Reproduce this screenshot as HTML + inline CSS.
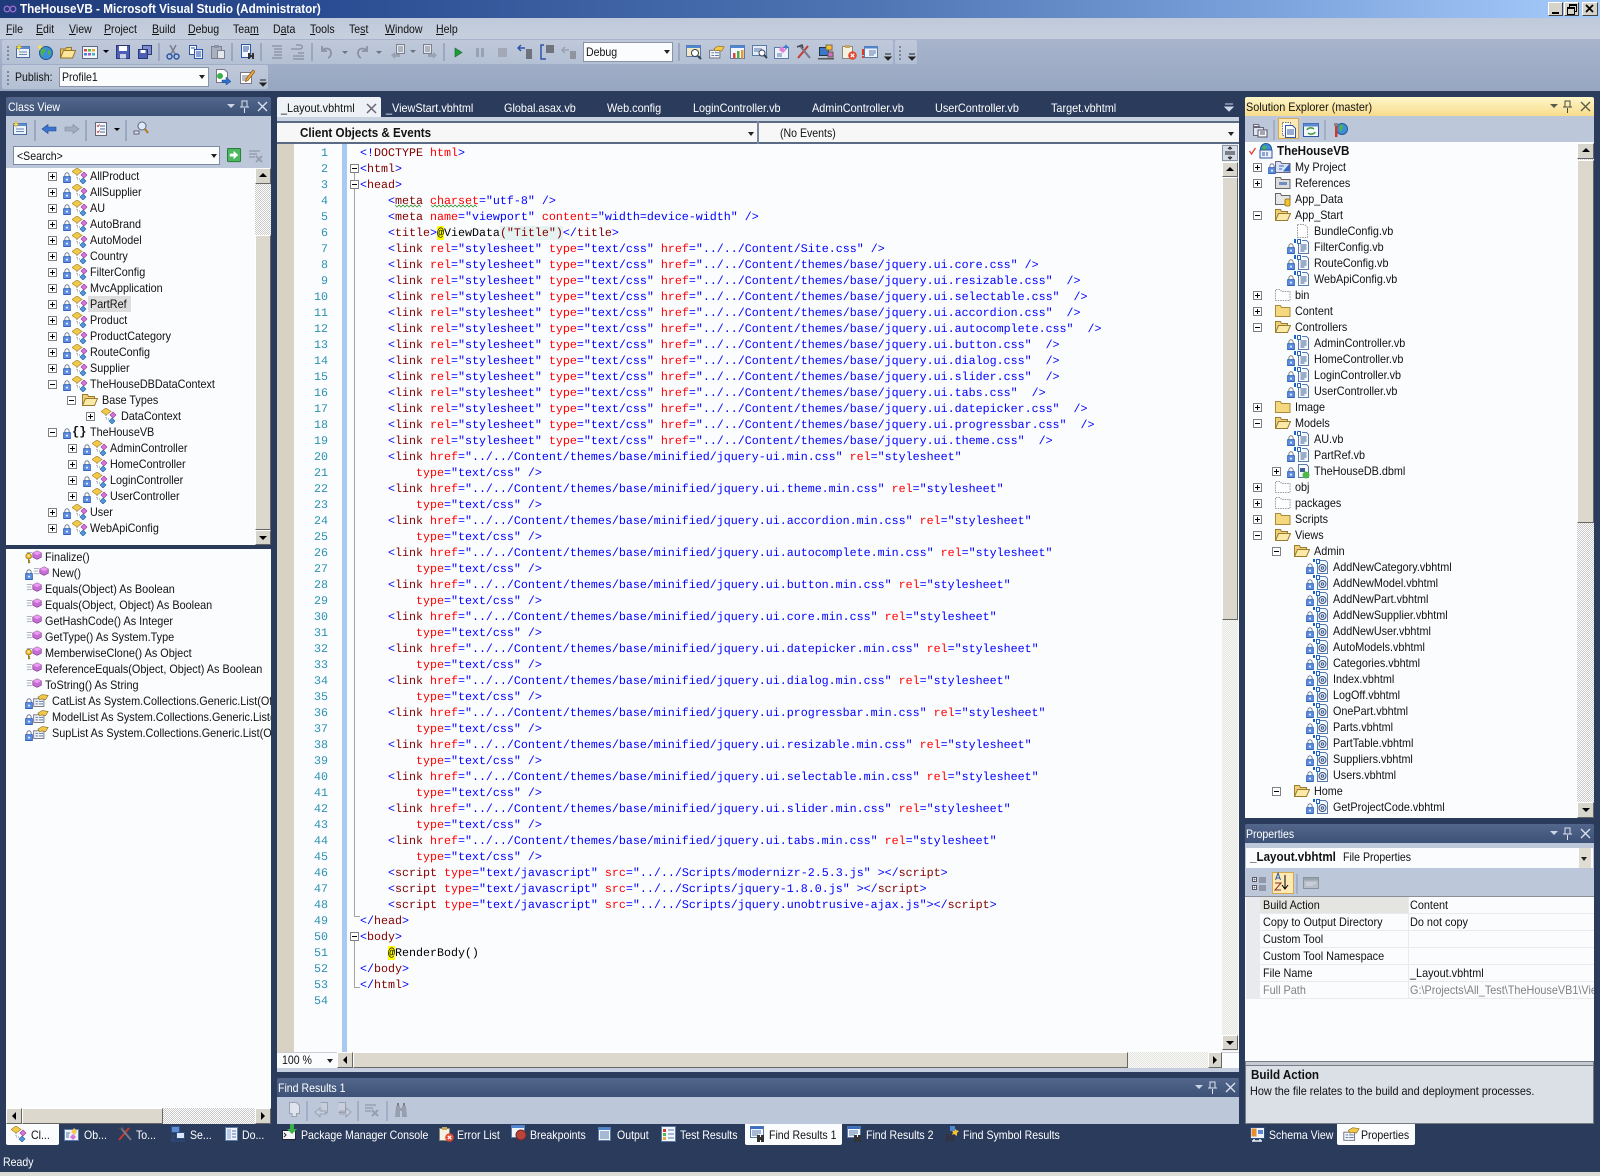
<!DOCTYPE html>
<html><head><meta charset="utf-8"><title>TheHouseVB - Microsoft Visual Studio</title>
<style>
html,body{margin:0;padding:0}
body{width:1600px;height:1176px;position:relative;overflow:hidden;background:#2a3b5c;font:12px/16px "Liberation Sans",sans-serif;color:#111}
div,span,svg{position:absolute;display:block}
.t{white-space:pre;transform:scaleX(.88);transform-origin:0 0;line-height:16px}
.t.f{transform:scaleX(.905)}
.t.bd{font-weight:bold;font-size:12.5px;transform:scaleX(.93)}
.w{color:#fff}
.t u{position:static;text-decoration:underline}
.pt{background:linear-gradient(#52678b,#3d5178)}
.tb{background:#bcc7da}
.wh{background:#fbfcfe}
.thumb{background:#dcd8cd;border:1px solid;border-color:#fff #666 #666 #fff;box-sizing:border-box}
.btn{background:#d8d5cc;border:1px solid;border-color:#fff #666 #666 #fff;box-sizing:border-box}
.btn:after{content:"";position:absolute;left:50%;top:50%;border:4px solid transparent;margin:-4px}
.up:after{border-bottom-color:#000;margin-top:-7px}
.dn:after{border-top-color:#000;margin-top:-2px}
.lf:after{border-right-color:#000;margin-left:-6px}
.rt:after{border-left-color:#000;margin-left:-2px}
.dith{background:repeating-conic-gradient(#c9c9c9 0 25%,#fff 0 50%) 0 0/2px 2px}
.dith2{background:repeating-conic-gradient(#e6e6e0 0 25%,#f8f8f6 0 50%) 0 0/2px 2px}
.arr{width:0;height:0;border:3.5px solid transparent;border-top:4px solid #222;border-bottom:0}
.sep{width:1px;background:#7c8aa6}
.r{left:0;height:16px;width:100%;position:relative;display:block}
.r span{left:var(--x);top:0;white-space:pre;transform:scaleX(.9);transform-origin:0 0;line-height:16px}
.r s{position:absolute;display:block;left:calc(var(--x) - 42px);top:4px;width:7px;height:7px;border:1px solid #808080;background:#fff;box-sizing:content-box;text-decoration:none;margin:0}
.r s:before{content:"";position:absolute;left:1px;top:3px;width:5px;height:1px;background:#000}
.r s.p:after{content:"";position:absolute;left:3px;top:1px;width:1px;height:5px;background:#000}
.r .k{left:calc(var(--x) - 27px);top:4px;width:8px;height:11px}
.r .c{left:calc(var(--x) - 20px);top:0;width:16px;height:16px}
.cv .c{left:calc(var(--x) - 18px)}
#code,#nums{font:11.67px/16px "Liberation Mono",monospace;white-space:pre;text-rendering:geometricPrecision}
#code{left:360px;top:145px;color:#00f;width:860px}
#code i{font-style:normal;color:#800000;position:static}
#code u{text-decoration:none;color:#f00;position:static}
#code em{font-style:normal;color:#000;position:static}
#code b{font-weight:normal;color:#000;background:#ff0;position:static}
#code q{quotes:none;color:#800000;background:#e4f2f2;position:static}
#nums{left:294px;width:34px;top:145px;text-align:right;color:#2b91af}
.gl{background:#a5a5a5;width:1px;left:354px}
</style></head><body>
<svg width="0" height="0" style="position:absolute">
<defs>
<symbol id="lk" viewBox="0 0 9 13"><path d="M2 6V3.500a2.500 2.500 0 015 0V6" fill="none" stroke="#5d6b86"/><rect x=".5" y="5.500" width="8" height="7" fill="#5c8ee2" stroke="#2d5cb3"/><rect x="3.500" y="8" width="2" height="2" fill="#fff"/></symbol>
<symbol id="cls" viewBox="0 0 16 16"><path d="M5 7v4h3" fill="none" stroke="#889" stroke-dasharray="1 1"/><path d="M5 0l5 3.500-5 3.500-5-3.500z" fill="#f3c94c" stroke="#a8822a" stroke-width=".7"/><path d="M12 4l3 3-3 3-3-3z" fill="#d874dc" stroke="#8a3c90" stroke-width=".6"/><path d="M11 10l3 3-3 3-3-3z" fill="#4f97dc" stroke="#2b5f96" stroke-width=".6"/></symbol>
<symbol id="fo" viewBox="0 0 16 16"><path d="M.5 4.500v-2h5l1 2h8.500v9H.5z" fill="#f5d77e" stroke="#a88a38"/></symbol>
<symbol id="fp" viewBox="0 0 16 16"><path d="M.5 13.500v-11h5l1 2h6v2" fill="#f1cf78" stroke="#9a7c30"/><path d="M.5 13.500l3-7h12l-3 7z" fill="#fbe9a8" stroke="#9a7c30"/></symbol>
<symbol id="fg" viewBox="0 0 16 16"><path d="M.5 4.500v-2h5l1 2h8.500v9H.5z" fill="#fff" stroke="#9a9a9a" stroke-dasharray="1.500 1"/></symbol>
<symbol id="fgr" viewBox="0 0 16 16"><path d="M.5 4.500v-2h5l1 2h8.500v9H.5z" fill="#dcdcdc" stroke="#666"/><rect x="4" y="7" width="8" height="3" fill="#6d8fc0"/></symbol>
<symbol id="fdb" viewBox="0 0 16 16"><path d="M.5 4.500v-2h5l1 2h8.500v9H.5z" fill="#e6e6e6" stroke="#666"/><rect x="10" y="8" width="5" height="7" rx="1.500" fill="#f4c430" stroke="#a88420"/></symbol>
<symbol id="fmy" viewBox="0 0 16 16"><path d="M.5 4.500v-2h5l1 2h8.500v9H.5z" fill="#d8e2f2" stroke="#667"/><path d="M4 7h5M4 10h3M9 12l5-6v6z" stroke="#2f69c8" fill="#2f69c8"/></symbol>
<symbol id="pg" viewBox="0 0 16 16"><path d="M3.500 1.500h7l3 3v10h-10z" fill="#fff" stroke="#999" stroke-dasharray="1.500 1"/></symbol>
<symbol id="vb" viewBox="0 0 16 16"><path d="M4.500 1.500h8l2 2v11h-10z" fill="#f6f9fe" stroke="#5a7aa8"/><path d="M6.500 6h6M6.500 8h6M6.500 10h6M6.500 12h4" stroke="#3e5f90"/><rect y="0" width="2" height="4" fill="#1c63c8"/><rect x="3" y="0" width="5" height="5" fill="#fff"/><path d="M3.500 .5v4M3.500.5h3v4h-3" fill="none" stroke="#1c63c8"/></symbol>
<symbol id="vh" viewBox="0 0 16 16"><path d="M4.500 1.500h8l2 2v11h-10z" fill="#f6f9fe" stroke="#5a7aa8"/><circle cx="9.500" cy="9" r="3.500" fill="none" stroke="#33507e"/><circle cx="9.500" cy="9" r="1.300" fill="none" stroke="#33507e"/><rect y="0" width="2" height="3" fill="#1c63c8"/><path d="M3.500.5h3v4h-3z" fill="#fff" stroke="#1c63c8"/></symbol>
<symbol id="dbm" viewBox="0 0 16 16"><path d="M4.500 1.500h8l2 2v11h-10z" fill="#f6f9fe" stroke="#5a7aa8"/><rect x="6" y="5" width="5" height="4" fill="#3e5f90"/><circle cx="12" cy="12" r="3.500" fill="#52b848"/></symbol>
<symbol id="mth" viewBox="0 0 20 16"><path d="M1 3h6M1 6h5M1 9h6" stroke="#a0a8b8"/><path d="M13 1l5 2.500v5L13 11l-5-2.500v-5z" fill="#c86ed4" stroke="#7e3a8a" stroke-width=".8"/><path d="M8 3.500l5 2.500 5-2.500-5-2.500z" fill="#ea9cf0"/></symbol>
<symbol id="key" viewBox="0 0 10 14"><circle cx="4.500" cy="4" r="3.500" fill="#f4c430" stroke="#9a7a1e"/><circle cx="4.500" cy="3.500" r="1" fill="#fff"/><path d="M4.500 7v6M4.500 10h2M4.500 12h2" stroke="#9a7a1e" stroke-width="1.500"/></symbol>
<symbol id="prp" viewBox="0 0 20 16"><path d="M2 6h12v9H2z" fill="#f6f8fc" stroke="#667"/><path d="M4 9h3M4 12h3M8 9h5M8 12h5" stroke="#4a6a9c"/><path d="M7 4l5-3 7 1-3 5-4-1-3 1z" fill="#f2c94c" stroke="#8a6a18" stroke-width=".7"/></symbol>
<symbol id="ws" viewBox="0 0 16 16"><rect x=".5" y="2.500" width="13" height="11" fill="#eef3fb" stroke="#4a6a9c"/><rect x=".5" y="2.500" width="13" height="2.500" fill="#5b8ad0"/><path d="M3 8h8M3 10.500h8" stroke="#6a86b0"/></symbol>
<symbol id="star" viewBox="0 0 16 16"><use href="#ws"/><path d="M3 0l1 2.500L6.500 3 4 4l-1 2.500L2 4-.5 3 2 2.500z" fill="#fbe14c" stroke="#c9a520" stroke-width=".4"/></symbol>
<symbol id="glb" viewBox="0 0 16 16"><circle cx="9" cy="9" r="6.500" fill="#3a8fd8" stroke="#24568c"/><path d="M5 5c3-1 5 1 3 3s-3 3-1 5c-2-1-5-4-2-8zM11 6c3 1 3 3 2 5-1 1-2-1-2-2z" fill="#4fb24a"/><path d="M3 0l1 2.500L6.500 3 4 4l-1 2.500L2 4-.5 3 2 2.500z" fill="#fbe14c"/></symbol>
<symbol id="opn" viewBox="0 0 16 16"><path d="M.5 14V5h5l1-1.500h5V6" fill="#eecb72" stroke="#947426"/><path d="M.5 14l3-7.500h12l-3 7.500z" fill="#fde59a" stroke="#947426"/></symbol>
<symbol id="add" viewBox="0 0 16 16"><rect x=".5" y="2.500" width="15" height="12" fill="#f4f6fb" stroke="#5a6a88"/><rect x="2" y="5" width="3" height="2.500" fill="#d8483e"/><rect x="6" y="5" width="3" height="2.500" fill="#52b848"/><rect x="10" y="5" width="3" height="2.500" fill="#e8a830"/><rect x="2" y="9" width="3" height="2.500" fill="#4a84d8"/><rect x="6" y="9" width="3" height="2.500" fill="#9a5ac8"/><rect x="10" y="9" width="3" height="2.500" fill="#3ab8b8"/></symbol>
<symbol id="sav" viewBox="0 0 16 16"><path d="M1.500 1.500h13v13h-13z" fill="#4c5fb4" stroke="#2a3878"/><rect x="4" y="2" width="8" height="5" fill="#fff"/><rect x="5" y="10" width="6" height="4.500" fill="#c8d0e4"/></symbol>
<symbol id="sva" viewBox="0 0 16 16"><path d="M5.500 1.500h9v9h-9z" fill="#7e8ecc" stroke="#2a3878"/><path d="M1.500 5.500h9v9h-9z" fill="#4c5fb4" stroke="#2a3878"/><rect x="3.500" y="6" width="5" height="3" fill="#fff"/></symbol>
<symbol id="cut" viewBox="0 0 16 16"><path d="M5 1l5 9M11 1L6 10" stroke="#7a8090" stroke-width="1.500"/><circle cx="4.500" cy="12.500" r="2.500" fill="none" stroke="#2d55a8" stroke-width="1.500"/><circle cx="11.500" cy="12.500" r="2.500" fill="none" stroke="#2d55a8" stroke-width="1.500"/></symbol>
<symbol id="cpy" viewBox="0 0 16 16"><path d="M1.500 1.500h7v9h-7z" fill="#fff" stroke="#2d55a8"/><path d="M6.500 5.500h8v9h-8z" fill="#eaf0fb" stroke="#2d55a8"/><path d="M8 8h5M8 10h5M8 12h5M3 4h4" stroke="#2d55a8"/></symbol>
<symbol id="pst" viewBox="0 0 16 16"><rect x="1.500" y="2.500" width="10" height="12" fill="#aab0bc" stroke="#7a8090"/><rect x="4" y="1" width="5" height="3" fill="#8c93a2"/><path d="M7.500 6.500h7v8h-7z" fill="#e4e7ee" stroke="#7a8090"/></symbol>
<symbol id="fnd" viewBox="0 0 16 16"><path d="M1.500 .5h9v13h-9z" fill="#f2f6fd" stroke="#2d55a8"/><path d="M3 3h6M3 5h6M3 7h5" stroke="#2d55a8"/><path d="M8 9h2v6H8zM12 9h2v6h-2zM9 11h4v2H9z" fill="#333"/></symbol>
<symbol id="cmt" viewBox="0 0 16 16"><path d="M3 2h10M5 5h8M5 8h8M5 11h8M3 14h10" stroke="#7a8090" fill="none"/></symbol>
<symbol id="unc" viewBox="0 0 16 16"><path d="M3 12h11M3 15h11M8 9h6M1 5h9c3 0 3-4 0-4H6" stroke="#7a8090" fill="none"/></symbol>
<symbol id="und" viewBox="0 0 16 16"><path d="M3 2v5h5M3 7c3-4 9-3 9 2 0 2-1 4-3 5" stroke="#8a92a2" stroke-width="1.800" fill="none"/></symbol>
<symbol id="red" viewBox="0 0 16 16"><path d="M13 2v5H8M13 7c-3-4-9-3-9 2 0 2 1 4 3 5" stroke="#8a92a2" stroke-width="1.800" fill="none"/></symbol>
<symbol id="nvb" viewBox="0 0 16 16"><path d="M6.500.5h8v9h-8z" fill="#e4e7ee" stroke="#7a8090"/><path d="M8 3h5M8 5h5M8 7h5" stroke="#7a8090"/><path d="M1 11l4-3v2h5v3H5v2z" fill="#9aa2b2"/></symbol>
<symbol id="nvf" viewBox="0 0 16 16"><path d="M1.500.5h8v9h-8z" fill="#e4e7ee" stroke="#7a8090"/><path d="M3 3h5M3 5h5M3 7h5" stroke="#7a8090"/><path d="M15 11l-4-3v2H6v3h5v2z" fill="#9aa2b2"/></symbol>
<symbol id="stp" viewBox="0 0 16 16"><path d="M1 4h7M4 1L1 4l3 3" stroke="#2d55a8" fill="none" stroke-width="1.500"/><path d="M9 6h6M9 8h6M9 10h6M9 12h6M9 14h6" stroke="#222"/></symbol>
<symbol id="sto" viewBox="0 0 16 16"><path d="M5 1H2v14h5" stroke="#2d55a8" fill="none" stroke-width="1.500"/><path d="M7 2h8M7 4h8M7 6h8M7 8h8" stroke="#222"/></symbol>
<symbol id="stu" viewBox="0 0 16 16"><path d="M1 6h7M4 3L1 6l3 3" stroke="#9aa2b2" fill="none" stroke-width="1.500"/><path d="M9 8h6M9 10h6M9 12h6M9 14h6" stroke="#666"/></symbol>
<symbol id="wmg" viewBox="0 0 16 16"><rect x=".5" y="1.500" width="14" height="11" fill="#f3e8c0" stroke="#5a7aa8"/><rect x=".5" y="1.500" width="14" height="2.500" fill="#4f86d2"/><circle cx="9" cy="9" r="3.500" fill="#fff" stroke="#345"/><path d="M12 12l3 3" stroke="#345" stroke-width="2"/></symbol>
<symbol id="wch" viewBox="0 0 16 16"><rect x=".5" y="1.500" width="14" height="13" fill="#f2f6fc" stroke="#5a7aa8"/><rect x=".5" y="1.500" width="14" height="2.500" fill="#4f86d2"/><rect x="3" y="9" width="2.500" height="5.500" fill="#d8483e"/><rect x="7" y="7" width="2.500" height="7.500" fill="#52a848"/><rect x="11" y="6" width="2.500" height="8.500" fill="#e89830"/></symbol>
<symbol id="wsr" viewBox="0 0 16 16"><rect x=".5" y="1.500" width="14" height="10" fill="#e4ecf8" stroke="#5a7aa8"/><path d="M2 5h8M2 7h5" stroke="#5a7aa8"/><circle cx="10" cy="9" r="3" fill="#fff" stroke="#345"/><path d="M12 11l3 3" stroke="#345" stroke-width="2"/></symbol>
<symbol id="wsp" viewBox="0 0 16 16"><rect x=".5" y="3.500" width="14" height="11" fill="#eef3fb" stroke="#5a7aa8"/><path d="M7 2l5 4-3 3-4-3z" fill="#e080d8"/><path d="M12 0l1 2 2 1-2 1-1 2-1-2-2-1 2-1z" fill="#3878d0"/><path d="M3 10h5M3 12h5" stroke="#5a7aa8"/></symbol>
<symbol id="tls" viewBox="0 0 16 16"><path d="M2 14L12 2" stroke="#c83a2e" stroke-width="2"/><path d="M14 14L4 2" stroke="#778" stroke-width="2"/><path d="M1 3l5-2 1 3" fill="none" stroke="#445" stroke-width="1.500"/></symbol>
<symbol id="col" viewBox="0 0 16 16"><rect x="1.500" y="3.500" width="9" height="8" fill="#3a78c8" stroke="#234"/><rect x="8" y="1" width="6" height="5" fill="#f4c430" stroke="#765"/><rect x="10" y="8" width="5" height="5" fill="#d070c8" stroke="#654"/><rect y="14" width="16" height="1.500" fill="#555"/></symbol>
<symbol id="clx" viewBox="0 0 16 16"><path d="M1.500 2.500h10v12h-10z" fill="#f6f0e2" stroke="#887"/><rect x="4" y="1" width="5" height="3" fill="#c8a860"/><circle cx="11.500" cy="11.500" r="4.300" fill="#e04a32"/><path d="M9.800 9.800l3.400 3.400M13.200 9.800l-3.400 3.400" stroke="#fff" stroke-width="1.300"/></symbol>
<symbol id="lst" viewBox="0 0 16 16"><rect x="2.500" y="2.500" width="13" height="11" fill="#eef3fb" stroke="#5a7aa8"/><rect x="2.500" y="2.500" width="13" height="2" fill="#4f86d2"/><path d="M7 7h7M7 9h7M7 11h5" stroke="#5a7aa8"/><path d="M1 5v6" stroke="#d83a2a" stroke-width="2"/><circle cx="1" cy="13" r="1.100" fill="#d83a2a"/></symbol>
<symbol id="pub" viewBox="0 0 16 16"><path d="M1.500.5h8l3 3v10h-11z" fill="#fff" stroke="#778"/><circle cx="5" cy="7" r="3" fill="#3ab048"/><path d="M7 11h4V8l5 4.500L11 16v-2.500H7z" fill="#2d6fd0" stroke="#1a4a90" stroke-width=".5"/></symbol>
<symbol id="pen" viewBox="0 0 16 16"><rect x="1.500" y="3.500" width="11" height="11" fill="#fff" stroke="#778"/><path d="M3 7h7M3 9h5M3 11h4" stroke="#778"/><path d="M7 10L14 1l2 1.500-7 9-2.500 1z" fill="#f2a83a" stroke="#8a5a18" stroke-width=".7"/></symbol>
<symbol id="arl" viewBox="0 0 16 16"><path d="M1 8l6-4.500V6h8v4H7v2.500z" fill="#3a74cc" stroke="#1e4a90" stroke-width=".6"/></symbol>
<symbol id="arr" viewBox="0 0 16 16"><path d="M15 8L9 3.500V6H1v4h8v2.500z" fill="#a4adbd" stroke="#8088a0" stroke-width=".6"/></symbol>
<symbol id="chk" viewBox="0 0 16 16"><rect x="1.500" y="1.500" width="11" height="13" fill="#f6f8fc" stroke="#667"/><path d="M6 5h5M6 8h5M6 11h5" stroke="#4a6a9c"/><path d="M3 4.500l1 1 1.500-2M3 10.500l1 1 1.500-2" stroke="#c33" fill="none"/></symbol>
<symbol id="hier" viewBox="0 0 16 16"><circle cx="9" cy="5" r="4" fill="#dcebfa" stroke="#667"/><rect x="1" y="10" width="5" height="3" fill="#dfe6f0" stroke="#667"/><path d="M12 8l3 4" stroke="#b07a20" stroke-width="2"/></symbol>
<symbol id="go" viewBox="0 0 16 16"><rect x=".5" y=".5" width="14" height="14" rx="1" fill="#4cb860" stroke="#2a7a3c"/><path d="M3 6h4V3l5 4.500L7 12V9H3z" fill="#fff"/></symbol>
<symbol id="clr" viewBox="0 0 16 16"><path d="M1 3h11M1 6h8M1 9h6" stroke="#98a0b0" stroke-width="1.500"/><path d="M8 8l6 6M14 8l-6 6" stroke="#98a0b0" stroke-width="2"/></symbol>
<symbol id="sol" viewBox="0 0 18 16"><circle cx="11" cy="6" r="5.500" fill="#3a8fd8" stroke="#24568c"/><path d="M8 3c3-1 4 1 3 3-1 1-2 2-1 4-2-1-4-4-2-7z" fill="#4fb24a"/><rect x="5" y="7" width="12" height="8" fill="#eef3fb" stroke="#2d55a8"/><path d="M7 10h3M7 12h3M12 9v4" stroke="#2d55a8"/></symbol>
<symbol id="tbA" viewBox="0 0 16 16"><path d="M1.500 5.500h10v8h-10z" fill="#dfe5f0" stroke="#667"/><path d="M1.500 2.500h5l1 2h-6z" fill="#f1f3f8" stroke="#667"/><rect x="6" y="8" width="9" height="7" fill="#f6f8fc" stroke="#556"/><path d="M8 10h5M8 12h5" stroke="#556"/></symbol>
<symbol id="tbB" viewBox="0 0 16 16"><path d="M1.500 .5h8v13h-8z" fill="#fff" stroke="#777" stroke-dasharray="1.500 1"/><path d="M4.500 3.500h7l3 3v9h-10z" fill="#fff" stroke="#2d55a8"/><path d="M6 8h7M6 10h7M6 12h7" stroke="#2d55a8"/></symbol>
<symbol id="tbC" viewBox="0 0 16 16"><rect x=".5" y="1.500" width="15" height="13" fill="#f4f7fc" stroke="#2d55a8"/><rect x=".5" y="1.500" width="15" height="3" fill="#5b8ad0"/><path d="M4 8a4 3 0 017-1M12 10a4 3 0 01-7 1" stroke="#3a9a30" fill="none" stroke-width="1.500"/></symbol>
<symbol id="tbD" viewBox="0 0 16 16"><circle cx="10" cy="7" r="5.500" fill="#3a8fd8" stroke="#24568c"/><path d="M8 3c3-1 3 1 3 3-1 1-2 2-1 4-2-1-4-4-2-7z" fill="#4fb24a"/><rect x="2" y="1" width="4" height="3" fill="#888"/><rect x="3" y="4" width="2.500" height="11" fill="#c83a2e"/></symbol>
<symbol id="psh" viewBox="0 0 16 16"><rect x=".5" y="6.500" width="13" height="9" fill="#f2f4f8" stroke="#223"/><path d="M2 9l2 2-2 2" stroke="#223" fill="none"/><path d="M8 0h4v5h3l-5 5-5-5h3z" fill="#3ab048"/></symbol>
<symbol id="brk" viewBox="0 0 16 16"><rect x=".5" y=".5" width="13" height="12" fill="#f2f6fc" stroke="#5a7aa8"/><rect x=".5" y=".5" width="13" height="2.500" fill="#4f86d2"/><circle cx="10" cy="10" r="5" fill="#b8443c" stroke="#7a2a24"/></symbol>
<symbol id="out" viewBox="0 0 16 16"><rect x="2.500" y="1.500" width="12" height="13" fill="#f2f6fc" stroke="#5a7aa8"/><rect x="2.500" y="1.500" width="12" height="2.500" fill="#4f86d2"/><path d="M4 6h9M4 8h9M4 10h9M4 12h9" stroke="#5a7aa8"/></symbol>
<symbol id="trs" viewBox="0 0 16 16"><rect x=".5" y=".5" width="14" height="15" fill="#f2f6fc" stroke="#5a7aa8"/><rect x="2" y="3" width="3" height="3" fill="#d83a2a"/><rect x="2" y="7" width="3" height="3" fill="#52b848"/><rect x="2" y="11" width="3" height="3" fill="#e8b030"/><path d="M7 4h6M7 8h6M7 12h6" stroke="#5a7aa8"/></symbol>
<symbol id="fr" viewBox="0 0 16 16"><rect x=".5" y=".5" width="13" height="11" fill="#f2f6fc" stroke="#5a7aa8"/><rect x=".5" y=".5" width="13" height="2.500" fill="#3a6ec0"/><path d="M2 5h9M2 7h9M2 9h6" stroke="#5a7aa8"/><path d="M7 9h3v7H7zM11 9h3v7h-3zM9 11h3v3H9z" fill="#333"/></symbol>
<symbol id="fs" viewBox="0 0 16 16"><path d="M1 8h3v8H1zM6 8h3v8H6zM3 10h4v3H3z" fill="#334"/><path d="M9 1l2 3 3 1-2 2v3l-3-2-2 1 1-3-2-2 3-1z" fill="#f4c430"/><path d="M5 0h5v5H5z" fill="#4f86d2"/></symbol>
<symbol id="obb" viewBox="0 0 16 16"><rect x=".5" y="3.500" width="14" height="11" fill="#eef3fb" stroke="#5a7aa8"/><path d="M7 6l3-4 3 3-2 4z" fill="#f2c94c"/><path d="M9 8l3 3-3 3-3-3z" fill="#d874dc"/><path d="M2 7h4M2 9h3M2 11h3" stroke="#5a7aa8"/></symbol>
<symbol id="srv" viewBox="0 0 16 16"><rect x="1.500" y=".5" width="8" height="6" fill="#5b8ad0" stroke="#2d4f88"/><rect x="6.500" y="6.500" width="8" height="6" fill="#dce6f6" stroke="#2d4f88"/><path d="M1 10h4M1 13h4M1 15h14" stroke="#2d4f88"/></symbol>
<symbol id="doc" viewBox="0 0 16 16"><rect x="1.500" y="1.500" width="12" height="13" fill="#eef3fb" stroke="#5a7aa8"/><rect x="3" y="3" width="4" height="10" fill="#b8cce8"/><path d="M8 5h4M8 8h4M8 11h4" stroke="#5a7aa8"/></symbol>
<symbol id="sch" viewBox="0 0 16 16"><rect x=".5" y="1.500" width="14" height="11" fill="#eef3fb" stroke="#2d4f88"/><rect x="1.500" y="2.500" width="5" height="8" fill="#e88c30"/><rect x="8" y="4" width="5" height="4" fill="#5b8ad0"/><path d="M4 13v2M10 13v2M2 15h10" stroke="#eef3fb" stroke-width="1.500"/></symbol>
<symbol id="fi1" viewBox="0 0 16 16"><path d="M3.500.5h7l3 3v8h-3v3H6v-3H3.500z" fill="#dfe3eb" stroke="#9aa2b2"/></symbol>
<symbol id="fi2" viewBox="0 0 16 16"><path d="M6.500.5h7v10h-3M1 10l5-4v3h6v3H6v3z" fill="#c8cedb" stroke="#9aa2b2"/></symbol>
<symbol id="fi3" viewBox="0 0 16 16"><path d="M2.500.5h7v10h-7M15 10l-5-4v3H4v3h6v3z" fill="#c8cedb" stroke="#9aa2b2"/></symbol>
<symbol id="fi4" viewBox="0 0 16 16"><path d="M1 3h11M1 6h8M1 9h6" stroke="#98a0b0" stroke-width="1.500"/><path d="M8 8l6 6M14 8l-6 6" stroke="#98a0b0" stroke-width="2"/></symbol>
<symbol id="fi5" viewBox="0 0 16 16"><path d="M2 4h4v11H1zM8 4h4l1 11H8zM5 6h4v3H5z" fill="#98a0b0"/><path d="M3 1h2v3H3zM9 1h2v3H9z" fill="#7a8090"/></symbol>
<symbol id="cat" viewBox="0 0 18 16"><rect x="1.500" y="1.500" width="4" height="4" fill="#fff" stroke="#556"/><rect x="1.500" y="9.500" width="4" height="4" fill="#fff" stroke="#556"/><path d="M2.500 3.500h2M3.500 2.500v2M2.500 11.500h2M3.500 10.500v2M8 2h7M8 4h7M8 6h7M8 10h7M8 12h7M8 14h7" stroke="#667"/></symbol>
<symbol id="az" viewBox="0 0 18 18"><path d="M14 1v13M11 11l3 4 3-4" stroke="#000" fill="none"/></symbol>
<symbol id="pgs" viewBox="0 0 16 16"><rect x=".5" y="2.500" width="15" height="11" fill="#b8bec8" stroke="#8a929e"/><rect x="1" y="3" width="14" height="2.500" fill="#9aa2ae"/><path d="M3 8h10M3 10h7" stroke="#dde"/></symbol>
</defs></svg>

<!-- title bar -->
<div style="left:0;top:0;width:1600px;height:18px;background:linear-gradient(90deg,#1f3a78 0,#2a4c92 20%,#5076b4 55%,#7ea4de 80%,#a6ccfb 100%)"></div>
<svg style="left:2px;top:2px" width="16" height="14"><circle cx="5" cy="7" r="2.800" fill="none" stroke="#9a6ad0" stroke-width="1.300"/><circle cx="11" cy="7" r="2.800" fill="none" stroke="#9a6ad0" stroke-width="1.300"/></svg>
<div class="t" style="left:20px;top:1px;color:#fff;font-weight:bold;font-size:13px;transform:scaleX(.9)">TheHouseVB - Microsoft Visual Studio (Administrator)</div>
<div style="left:1548px;top:2px;width:15px;height:14px;background:#d6d3ca;border:1px solid;border-color:#fff #444 #444 #fff;box-sizing:border-box"><div style="left:3px;top:9px;width:7px;height:2px;background:#000"></div></div>
<div style="left:1564px;top:2px;width:15px;height:14px;background:#d6d3ca;border:1px solid;border-color:#fff #444 #444 #fff;box-sizing:border-box"><div style="left:4px;top:1px;width:6px;height:5px;border:1px solid #000;border-top-width:2px"></div><div style="left:2px;top:4px;width:6px;height:5px;border:1px solid #000;border-top-width:2px;background:#d6d3ca"></div></div>
<div style="left:1582px;top:2px;width:16px;height:14px;background:#d6d3ca;border:1px solid;border-color:#fff #444 #444 #fff;box-sizing:border-box"><svg width="14" height="12"><path d="M3 2l7 7M10 2L3 9" stroke="#000" stroke-width="1.800"/></svg></div>

<!-- menu + toolbars bg -->
<div style="left:0;top:18px;width:1600px;height:21px;background:linear-gradient(#bfc9da,#c6cfde)"></div>
<div style="left:0;top:39px;width:1600px;height:52px;background:linear-gradient(#a8b4cc,#97a6c1)"></div>
<div class="t" style="left:6px;top:21px"><u>F</u>ile</div>
<div class="t" style="left:36px;top:21px"><u>E</u>dit</div>
<div class="t" style="left:69px;top:21px"><u>V</u>iew</div>
<div class="t" style="left:104px;top:21px"><u>P</u>roject</div>
<div class="t" style="left:152px;top:21px"><u>B</u>uild</div>
<div class="t" style="left:188px;top:21px"><u>D</u>ebug</div>
<div class="t" style="left:233px;top:21px">Tea<u>m</u></div>
<div class="t" style="left:273px;top:21px">D<u>a</u>ta</div>
<div class="t" style="left:310px;top:21px"><u>T</u>ools</div>
<div class="t" style="left:349px;top:21px">Te<u>s</u>t</div>
<div class="t" style="left:385px;top:21px"><u>W</u>indow</div>
<div class="t" style="left:436px;top:21px"><u>H</u>elp</div>

<div style="left:2px;top:40px;width:891px;height:24px;background:linear-gradient(#bfc9da,#b4c0d4);border-radius:2px"></div>
<div style="left:895px;top:40px;width:22px;height:24px;background:linear-gradient(#bfc9da,#b4c0d4);border-radius:2px"></div>
<div style="left:2px;top:65px;width:266px;height:24px;background:linear-gradient(#bfc9da,#b4c0d4);border-radius:2px"></div>
<div style="left:583px;top:42px;width:90px;height:20px;background:#fbfcfe;border:1px solid #8a94a8;box-sizing:border-box"></div>
<div class="t" style="left:586px;top:44px">Debug</div>
<div class="arr" style="left:664px;top:50px"></div>
<div class="t" style="left:15px;top:69px">Publish:</div>
<div style="left:59px;top:67px;width:150px;height:20px;background:#fbfcfe;border:1px solid #8a94a8;box-sizing:border-box"></div>
<div class="t" style="left:62px;top:69px">Profile1</div>
<div class="arr" style="left:199px;top:75px"></div>

<svg style="left:0;top:0" width="1600" height="100">
<g fill="#7a869c"><rect x="7" y="46" width="2" height="2"/><rect x="7" y="50" width="2" height="2"/><rect x="7" y="54" width="2" height="2"/><rect x="7" y="58" width="2" height="2"/><rect x="7" y="71" width="2" height="2"/><rect x="7" y="75" width="2" height="2"/><rect x="7" y="79" width="2" height="2"/><rect x="7" y="83" width="2" height="2"/><rect x="899" y="46" width="2" height="2"/><rect x="899" y="50" width="2" height="2"/><rect x="899" y="54" width="2" height="2"/><rect x="899" y="58" width="2" height="2"/></g>
<use href="#star" x="16" y="44" width="16" height="16"/><use href="#glb" x="37" y="44" width="16" height="16"/><use href="#opn" x="60" y="44" width="16" height="16"/><use href="#add" x="82" y="44" width="16" height="16"/><path d="M103 50h6l-3 3z"/>
<use href="#sav" x="115" y="44" width="16" height="16"/><use href="#sva" x="137" y="44" width="16" height="16"/>
<path d="M159 43v18M232 43v18M261 43v18M312 43v18M444 43v18M679 43v18" stroke="#7c8aa6"/>
<use href="#cut" x="165" y="44" width="16" height="16"/><use href="#cpy" x="188" y="44" width="16" height="16"/><use href="#pst" x="210" y="44" width="16" height="16"/><use href="#fnd" x="240" y="44" width="16" height="16"/>
<use href="#cmt" x="269" y="44" width="16" height="16"/><use href="#unc" x="290" y="44" width="16" height="16"/>
<use href="#und" x="319" y="44" width="16" height="16"/><path d="M342 51h6l-3 3z" fill="#6a7488"/><use href="#red" x="354" y="44" width="16" height="16"/><path d="M376 51h6l-3 3z" fill="#6a7488"/>
<use href="#nvb" x="390" y="44" width="16" height="16"/><path d="M410 50h6l-3 3z" fill="#6a7488"/><use href="#nvf" x="422" y="44" width="16" height="16"/>
<path d="M455 48l7 4.500-7 4.500z" fill="#1f9a3a" stroke="#146a28" stroke-width=".6"/>
<path d="M476 48h3v9h-3zM481 48h3v9h-3z" fill="#9aa2b2"/><rect x="498" y="48" width="9" height="9" fill="#a2a8b6"/>
<use href="#stp" x="517" y="44" width="16" height="16"/><use href="#sto" x="539" y="44" width="16" height="16"/><use href="#stu" x="561" y="44" width="16" height="16"/>
<use href="#wmg" x="686" y="44" width="16" height="16"/><use href="#prp" x="708" y="44" width="17" height="16"/><use href="#wch" x="730" y="44" width="16" height="16"/><use href="#wsr" x="752" y="44" width="16" height="16"/><use href="#wsp" x="774" y="44" width="16" height="16"/><use href="#tls" x="796" y="44" width="16" height="16"/><use href="#col" x="818" y="44" width="16" height="16"/><use href="#clx" x="841" y="44" width="16" height="16"/><use href="#lst" x="862" y="44" width="16" height="16"/>
<path d="M885 54h6M885 57h6l-3 3z" stroke="#222" fill="#222"/><path d="M909 54h6M909 57h6l-3 3z" stroke="#222" fill="#222"/><path d="M260 80h6M260 83h6l-3 3z" stroke="#222" fill="#222"/>
<use href="#pub" x="215" y="69" width="16" height="16"/><use href="#pen" x="239" y="69" width="16" height="16"/>
</svg>

<!-- Class View -->
<div class="pt" style="left:6px;top:97px;width:265px;height:19px;border-radius:2px 2px 0 0"></div>
<div class="t w" style="left:8px;top:99px">Class View</div>
<svg style="left:225px;top:99px" width="46" height="16" fill="none"><path d="M2 5h8l-4 4z" fill="#cdd6e6"/><path d="M17 2h5v6h-5zM15 8h9M19.500 9v5" stroke="#dce3ef"/><path d="M33 3l9 9M42 3l-9 9" stroke="#dce3ef" stroke-width="1.300"/></svg>
<div class="tb" style="left:6px;top:116px;width:265px;height:52px"></div>
<svg style="left:0;top:116px" width="271" height="52">
<use href="#star" x="13" y="5" width="16" height="16"/><path d="M35 4v21M86 4v21M126 4v21" stroke="#7c8aa6"/><use href="#arl" x="41" y="5" width="16" height="16"/><use href="#arr" x="64" y="5" width="16" height="16"/><use href="#chk" x="94" y="5" width="16" height="16"/><path d="M114 12h6l-3 3z"/><use href="#hier" x="133" y="5" width="16" height="16"/>
<use href="#go" x="227" y="32" width="15" height="15"/><use href="#clr" x="248" y="32" width="16" height="16"/></svg>
<div class="wh" style="left:13px;top:146px;width:207px;height:19px;border:1px solid #7c8aa6;box-sizing:border-box"></div>
<div class="t" style="left:17px;top:148px">&lt;Search&gt;</div>
<div class="arr" style="left:211px;top:154px"></div>
<div class="wh" style="left:6px;top:168px;width:265px;height:377px"></div>
<div class="cv" style="left:0;top:168px;width:255px;height:376px;overflow:hidden">
<div class="r" style="--x:90px"><s class="p"></s><svg class="k"><use href="#lk"/></svg><svg class="c"><use href="#cls"/></svg><span>AllProduct</span></div>
<div class="r" style="--x:90px"><s class="p"></s><svg class="k"><use href="#lk"/></svg><svg class="c"><use href="#cls"/></svg><span>AllSupplier</span></div>
<div class="r" style="--x:90px"><s class="p"></s><svg class="k"><use href="#lk"/></svg><svg class="c"><use href="#cls"/></svg><span>AU</span></div>
<div class="r" style="--x:90px"><s class="p"></s><svg class="k"><use href="#lk"/></svg><svg class="c"><use href="#cls"/></svg><span>AutoBrand</span></div>
<div class="r" style="--x:90px"><s class="p"></s><svg class="k"><use href="#lk"/></svg><svg class="c"><use href="#cls"/></svg><span>AutoModel</span></div>
<div class="r" style="--x:90px"><s class="p"></s><svg class="k"><use href="#lk"/></svg><svg class="c"><use href="#cls"/></svg><span>Country</span></div>
<div class="r" style="--x:90px"><s class="p"></s><svg class="k"><use href="#lk"/></svg><svg class="c"><use href="#cls"/></svg><span>FilterConfig</span></div>
<div class="r" style="--x:90px"><s class="p"></s><svg class="k"><use href="#lk"/></svg><svg class="c"><use href="#cls"/></svg><span>MvcApplication</span></div>
<div class="r" style="--x:90px"><s class="p"></s><svg class="k"><use href="#lk"/></svg><svg class="c"><use href="#cls"/></svg><div style="left:88px;top:0;width:43px;height:16px;background:#dedede"></div><span>PartRef</span></div>
<div class="r" style="--x:90px"><s class="p"></s><svg class="k"><use href="#lk"/></svg><svg class="c"><use href="#cls"/></svg><span>Product</span></div>
<div class="r" style="--x:90px"><s class="p"></s><svg class="k"><use href="#lk"/></svg><svg class="c"><use href="#cls"/></svg><span>ProductCategory</span></div>
<div class="r" style="--x:90px"><s class="p"></s><svg class="k"><use href="#lk"/></svg><svg class="c"><use href="#cls"/></svg><span>RouteConfig</span></div>
<div class="r" style="--x:90px"><s class="p"></s><svg class="k"><use href="#lk"/></svg><svg class="c"><use href="#cls"/></svg><span>Supplier</span></div>
<div class="r" style="--x:90px"><s></s><svg class="k"><use href="#lk"/></svg><svg class="c"><use href="#cls"/></svg><span>TheHouseDBDataContext</span></div>
<div class="r" style="--x:102px"><s style="left:67px"></s><svg class="c" style="left:82px"><use href="#fp"/></svg><span>Base Types</span></div>
<div class="r" style="--x:121px"><s class="p" style="left:86px"></s><svg class="c" style="left:101px"><use href="#cls"/></svg><span>DataContext</span></div>
<div class="r" style="--x:90px"><s></s><svg class="k"><use href="#lk"/></svg><span style="left:72px;font-weight:bold;transform:none;font-family:'Liberation Mono'">{}</span><span>TheHouseVB</span></div>
<div class="r" style="--x:110px"><s class="p"></s><svg class="k"><use href="#lk"/></svg><svg class="c"><use href="#cls"/></svg><span>AdminController</span></div>
<div class="r" style="--x:110px"><s class="p"></s><svg class="k"><use href="#lk"/></svg><svg class="c"><use href="#cls"/></svg><span>HomeController</span></div>
<div class="r" style="--x:110px"><s class="p"></s><svg class="k"><use href="#lk"/></svg><svg class="c"><use href="#cls"/></svg><span>LoginController</span></div>
<div class="r" style="--x:110px"><s class="p"></s><svg class="k"><use href="#lk"/></svg><svg class="c"><use href="#cls"/></svg><span>UserController</span></div>
<div class="r" style="--x:90px"><s class="p"></s><svg class="k"><use href="#lk"/></svg><svg class="c"><use href="#cls"/></svg><span>User</span></div>
<div class="r" style="--x:90px"><s class="p"></s><svg class="k"><use href="#lk"/></svg><svg class="c"><use href="#cls"/></svg><span>WebApiConfig</span></div>
</div>
<div class="dith" style="left:255px;top:168px;width:16px;height:377px"></div>
<div class="btn up" style="left:255px;top:168px;width:16px;height:16px"></div>
<div class="thumb" style="left:255px;top:235px;width:16px;height:295px"></div>
<div class="btn dn" style="left:255px;top:530px;width:16px;height:15px"></div>

<div class="wh" style="left:6px;top:549px;width:265px;height:559px"></div>
<div style="left:0;top:549px;width:271px;height:220px;overflow:hidden">
<svg style="left:25px;top:0" width="24" height="200">
<use href="#mth" x="1" y="1" width="17" height="13.600"/><use href="#key" x="0" y="3" width="8" height="13"/>
<use href="#lk" x="0" y="20" width="8" height="11"/><use href="#mth" x="8" y="17" width="17" height="13.600"/>
<use href="#mth" x="1" y="33" width="17" height="13.600"/><use href="#mth" x="1" y="49" width="17" height="13.600"/><use href="#mth" x="1" y="65" width="17" height="13.600"/><use href="#mth" x="1" y="81" width="17" height="13.600"/><use href="#mth" x="1" y="97" width="17" height="13.600"/><use href="#key" x="0" y="99" width="8" height="13"/><use href="#mth" x="1" y="113" width="17" height="13.600"/><use href="#mth" x="1" y="129" width="17" height="13.600"/>
<use href="#prp" x="7" y="144" width="17" height="15"/><use href="#lk" x="0" y="149" width="8" height="11"/>
<use href="#prp" x="7" y="160" width="17" height="15"/><use href="#lk" x="0" y="165" width="8" height="11"/>
<use href="#prp" x="7" y="176" width="17" height="15"/><use href="#lk" x="0" y="181" width="8" height="11"/>
</svg>
<div class="t f" style="left:45px;top:0">Finalize()</div>
<div class="t f" style="left:52px;top:16px">New()</div>
<div class="t f" style="left:45px;top:32px">Equals(Object) As Boolean</div>
<div class="t f" style="left:45px;top:48px">Equals(Object, Object) As Boolean</div>
<div class="t f" style="left:45px;top:64px">GetHashCode() As Integer</div>
<div class="t f" style="left:45px;top:80px">GetType() As System.Type</div>
<div class="t f" style="left:45px;top:96px">MemberwiseClone() As Object</div>
<div class="t f" style="left:45px;top:112px">ReferenceEquals(Object, Object) As Boolean</div>
<div class="t f" style="left:45px;top:128px">ToString() As String</div>
<div class="t f" style="left:52px;top:144px">CatList As System.Collections.Generic.List(Of String)</div>
<div class="t f" style="left:52px;top:160px">ModelList As System.Collections.Generic.List(Of String)</div>
<div class="t f" style="left:52px;top:176px">SupList As System.Collections.Generic.List(Of String)</div>
</div>
<div class="dith" style="left:6px;top:1108px;width:265px;height:16px"></div>
<div class="btn lf" style="left:6px;top:1108px;width:16px;height:16px"></div>
<div class="thumb" style="left:22px;top:1108px;width:141px;height:16px"></div>
<div class="btn rt" style="left:255px;top:1108px;width:16px;height:16px"></div>

<!-- Editor tabs -->
<div style="left:277px;top:97px;width:104px;height:22px;background:#eef1f6;border-radius:2px 2px 0 0"></div>
<div style="left:277px;top:117px;width:962px;height:5px;background:#c9d2e0"></div>
<div class="t f" style="left:281px;top:100px">_Layout.vbhtml</div>
<svg style="left:366px;top:103px" width="11" height="11"><path d="M1 1l9 9M10 1l-9 9" stroke="#667" stroke-width="1.500"/></svg>
<div class="t f w" style="left:386px;top:100px">_ViewStart.vbhtml</div>
<div class="t f w" style="left:504px;top:100px">Global.asax.vb</div>
<div class="t f w" style="left:607px;top:100px">Web.config</div>
<div class="t f w" style="left:693px;top:100px">LoginController.vb</div>
<div class="t f w" style="left:812px;top:100px">AdminController.vb</div>
<div class="t f w" style="left:935px;top:100px">UserController.vb</div>
<div class="t f w" style="left:1051px;top:100px">Target.vbhtml</div>
<svg style="left:1224px;top:103px" width="10" height="10"><path d="M1 1h8M1 4h8l-4 4z" stroke="#cdd6e6" fill="#cdd6e6"/></svg>

<!-- nav bar -->
<div style="left:277px;top:121px;width:962px;height:23px;background:#f6f7f6;border-top:2px solid #5b6b84;border-bottom:2px solid #5b6b84;box-sizing:border-box"></div>
<div style="left:757px;top:121px;width:2px;height:23px;background:#7c8aa0"></div>
<div class="t bd" style="left:300px;top:125px">Client Objects &amp; Events</div>
<div class="t" style="left:780px;top:125px">(No Events)</div>
<div class="arr" style="left:748px;top:132px"></div>
<div class="arr" style="left:1228px;top:132px"></div>

<!-- Editor -->
<div class="wh" style="left:277px;top:144px;width:962px;height:908px"></div>
<div style="left:277px;top:144px;width:17px;height:908px;background:#d8d2c4"></div>
<div style="left:342px;top:144px;width:5px;height:908px;background:#a8c9f2"></div>
<div id="nums">1
2
3
4
5
6
7
8
9
10
11
12
13
14
15
16
17
18
19
20
21
22
23
24
25
26
27
28
29
30
31
32
33
34
35
36
37
38
39
40
41
42
43
44
45
46
47
48
49
50
51
52
53
54</div>
<div class="gl" style="top:173px;height:7px"></div>
<div class="gl" style="top:189px;height:728px"></div>
<div style="left:354px;top:916px;width:6px;height:1px;background:#a5a5a5"></div>
<div class="gl" style="top:941px;height:47px"></div>
<div style="left:354px;top:987px;width:6px;height:1px;background:#a5a5a5"></div>
<svg style="left:350px;top:164px" width="10" height="10"><rect x=".5" y=".5" width="8" height="8" fill="#fff" stroke="#808080"/><path d="M2 4.500h5" stroke="#000"/></svg>
<svg style="left:350px;top:180px" width="10" height="10"><rect x=".5" y=".5" width="8" height="8" fill="#fff" stroke="#808080"/><path d="M2 4.500h5" stroke="#000"/></svg>
<svg style="left:350px;top:932px" width="10" height="10"><rect x=".5" y=".5" width="8" height="8" fill="#fff" stroke="#808080"/><path d="M2 4.500h5" stroke="#000"/></svg>
<svg style="left:388px;top:204px" width="95" height="5"><path d="M7 1l2 2 2-2 2 2 2-2 2 2 2-2 2 2 2-2 2 2 2-2 2 2 2-2 2 2M43 1l2 2 2-2 2 2 2-2 2 2 2-2 2 2 2-2 2 2 2-2 2 2 2-2 2 2 2-2 2 2 2-2 2 2 2-2 2 2 2-2 2 2 2-2 2 2" stroke="#3a9a3a" fill="none" stroke-width=".8"/></svg>
<div id="code">&lt;!<i>DOCTYPE</i> <u>html</u>&gt;
&lt;<i>html</i>&gt;
&lt;<i>head</i>&gt;
    &lt;<i>meta</i> <u>charset</u>="utf-8" /&gt;
    &lt;<i>meta</i> <u>name</u>="viewport" <u>content</u>="width=device-width" /&gt;
    &lt;<i>title</i>&gt;<b>@</b><em>ViewData</em><q>("Title")</q>&lt;/<i>title</i>&gt;
    &lt;<i>link</i> <u>rel</u>="stylesheet" <u>type</u>="text/css" <u>href</u>="../../Content/Site.css" /&gt;
    &lt;<i>link</i> <u>rel</u>="stylesheet" <u>type</u>="text/css" <u>href</u>="../../Content/themes/base/jquery.ui.core.css" /&gt;
    &lt;<i>link</i> <u>rel</u>="stylesheet" <u>type</u>="text/css" <u>href</u>="../../Content/themes/base/jquery.ui.resizable.css"  /&gt;
    &lt;<i>link</i> <u>rel</u>="stylesheet" <u>type</u>="text/css" <u>href</u>="../../Content/themes/base/jquery.ui.selectable.css"  /&gt;
    &lt;<i>link</i> <u>rel</u>="stylesheet" <u>type</u>="text/css" <u>href</u>="../../Content/themes/base/jquery.ui.accordion.css"  /&gt;
    &lt;<i>link</i> <u>rel</u>="stylesheet" <u>type</u>="text/css" <u>href</u>="../../Content/themes/base/jquery.ui.autocomplete.css"  /&gt;
    &lt;<i>link</i> <u>rel</u>="stylesheet" <u>type</u>="text/css" <u>href</u>="../../Content/themes/base/jquery.ui.button.css"  /&gt;
    &lt;<i>link</i> <u>rel</u>="stylesheet" <u>type</u>="text/css" <u>href</u>="../../Content/themes/base/jquery.ui.dialog.css"  /&gt;
    &lt;<i>link</i> <u>rel</u>="stylesheet" <u>type</u>="text/css" <u>href</u>="../../Content/themes/base/jquery.ui.slider.css"  /&gt;
    &lt;<i>link</i> <u>rel</u>="stylesheet" <u>type</u>="text/css" <u>href</u>="../../Content/themes/base/jquery.ui.tabs.css"  /&gt;
    &lt;<i>link</i> <u>rel</u>="stylesheet" <u>type</u>="text/css" <u>href</u>="../../Content/themes/base/jquery.ui.datepicker.css"  /&gt;
    &lt;<i>link</i> <u>rel</u>="stylesheet" <u>type</u>="text/css" <u>href</u>="../../Content/themes/base/jquery.ui.progressbar.css"  /&gt;
    &lt;<i>link</i> <u>rel</u>="stylesheet" <u>type</u>="text/css" <u>href</u>="../../Content/themes/base/jquery.ui.theme.css"  /&gt;
    &lt;<i>link</i> <u>href</u>="../../Content/themes/base/minified/jquery-ui.min.css" <u>rel</u>="stylesheet"
        <u>type</u>="text/css" /&gt;
    &lt;<i>link</i> <u>href</u>="../../Content/themes/base/minified/jquery.ui.theme.min.css" <u>rel</u>="stylesheet"
        <u>type</u>="text/css" /&gt;
    &lt;<i>link</i> <u>href</u>="../../Content/themes/base/minified/jquery.ui.accordion.min.css" <u>rel</u>="stylesheet"
        <u>type</u>="text/css" /&gt;
    &lt;<i>link</i> <u>href</u>="../../Content/themes/base/minified/jquery.ui.autocomplete.min.css" <u>rel</u>="stylesheet"
        <u>type</u>="text/css" /&gt;
    &lt;<i>link</i> <u>href</u>="../../Content/themes/base/minified/jquery.ui.button.min.css" <u>rel</u>="stylesheet"
        <u>type</u>="text/css" /&gt;
    &lt;<i>link</i> <u>href</u>="../../Content/themes/base/minified/jquery.ui.core.min.css" <u>rel</u>="stylesheet"
        <u>type</u>="text/css" /&gt;
    &lt;<i>link</i> <u>href</u>="../../Content/themes/base/minified/jquery.ui.datepicker.min.css" <u>rel</u>="stylesheet"
        <u>type</u>="text/css" /&gt;
    &lt;<i>link</i> <u>href</u>="../../Content/themes/base/minified/jquery.ui.dialog.min.css" <u>rel</u>="stylesheet"
        <u>type</u>="text/css" /&gt;
    &lt;<i>link</i> <u>href</u>="../../Content/themes/base/minified/jquery.ui.progressbar.min.css" <u>rel</u>="stylesheet"
        <u>type</u>="text/css" /&gt;
    &lt;<i>link</i> <u>href</u>="../../Content/themes/base/minified/jquery.ui.resizable.min.css" <u>rel</u>="stylesheet"
        <u>type</u>="text/css" /&gt;
    &lt;<i>link</i> <u>href</u>="../../Content/themes/base/minified/jquery.ui.selectable.min.css" <u>rel</u>="stylesheet"
        <u>type</u>="text/css" /&gt;
    &lt;<i>link</i> <u>href</u>="../../Content/themes/base/minified/jquery.ui.slider.min.css" <u>rel</u>="stylesheet"
        <u>type</u>="text/css" /&gt;
    &lt;<i>link</i> <u>href</u>="../../Content/themes/base/minified/jquery.ui.tabs.min.css" <u>rel</u>="stylesheet"
        <u>type</u>="text/css" /&gt;
    &lt;<i>script</i> <u>type</u>="text/javascript" <u>src</u>="../../Scripts/modernizr-2.5.3.js" &gt;&lt;/<i>script</i>&gt;
    &lt;<i>script</i> <u>type</u>="text/javascript" <u>src</u>="../../Scripts/jquery-1.8.0.js" &gt;&lt;/<i>script</i>&gt;
    &lt;<i>script</i> <u>type</u>="text/javascript" <u>src</u>="../../Scripts/jquery.unobtrusive-ajax.js"&gt;&lt;/<i>script</i>&gt;
&lt;/<i>head</i>&gt;
&lt;<i>body</i>&gt;
    <b>@</b><em>RenderBody()</em>
&lt;/<i>body</i>&gt;
&lt;/<i>html</i>&gt;
</div>
<!-- editor scrollbars -->
<div class="dith2" style="left:1222px;top:144px;width:16px;height:907px"></div>
<div style="left:1222px;top:145px;width:16px;height:16px;background:#d6dde9;border:1px solid #8a94a8;box-sizing:border-box"><svg width="14" height="14"><path d="M2 6h10M2 8h10M7 1v3M7 13v-3M5 3l2-2 2 2M5 11l2 2 2-2" stroke="#222" fill="none"/></svg></div>
<div class="btn up" style="left:1222px;top:162px;width:16px;height:15px"></div>
<div class="thumb" style="left:1222px;top:177px;width:16px;height:443px"></div>
<div class="btn dn" style="left:1222px;top:1035px;width:16px;height:15px"></div>
<div class="wh" style="left:277px;top:1052px;width:962px;height:16px"></div>
<div style="left:277px;top:1052px;width:962px;height:1px;background:#c8ccd4"></div>
<div class="t" style="left:282px;top:1052px">100 %</div>
<div class="arr" style="left:327px;top:1059px"></div>
<div class="dith2" style="left:337px;top:1052px;width:885px;height:16px"></div>
<div class="btn lf" style="left:337px;top:1052px;width:16px;height:16px"></div>
<div class="thumb" style="left:353px;top:1052px;width:775px;height:16px"></div>
<div class="btn rt" style="left:1208px;top:1052px;width:14px;height:16px"></div>
<div style="left:277px;top:1068px;width:962px;height:4px;background:#c5cfdf"></div>

<!-- Find Results -->
<div class="pt" style="left:277px;top:1078px;width:962px;height:19px;border-radius:2px 2px 0 0"></div>
<div class="t w" style="left:278px;top:1080px">Find Results 1</div>
<svg style="left:1193px;top:1080px" width="46" height="16" fill="none"><path d="M2 5h8l-4 4z" fill="#cdd6e6"/><path d="M17 2h5v6h-5zM15 8h9M19.500 9v5" stroke="#dce3ef"/><path d="M33 3l9 9M42 3l-9 9" stroke="#dce3ef" stroke-width="1.300"/></svg>
<div class="tb" style="left:277px;top:1097px;width:962px;height:27px"></div>
<svg style="left:277px;top:1097px" width="160" height="27"><use href="#fi1" x="9" y="5" width="16" height="16"/><path d="M30 4v20M81 4v20M110 4v20" stroke="#8a96ae"/><use href="#fi2" x="37" y="5" width="16" height="16"/><use href="#fi3" x="59" y="5" width="16" height="16"/><use href="#fi4" x="87" y="5" width="16" height="16"/><use href="#fi5" x="117" y="5" width="16" height="16"/></svg>

<!-- Bottom tabs -->
<div style="left:6px;top:1124px;width:53px;height:21px;background:#fbfcfe;border-radius:0 0 2px 2px"></div>
<div style="left:745px;top:1124px;width:97px;height:21px;background:#fbfcfe;border-radius:0 0 2px 2px"></div>
<div style="left:1337px;top:1124px;width:78px;height:21px;background:#fbfcfe;border-radius:0 0 2px 2px"></div>
<svg style="left:0;top:1124px" width="1600" height="20">
<use href="#cls" x="11" y="2" width="16" height="16"/><use href="#obb" x="64" y="2" width="16" height="16"/><use href="#tls" x="117" y="2" width="16" height="16"/><use href="#srv" x="170" y="2" width="16" height="16"/><use href="#doc" x="224" y="2" width="16" height="16"/><use href="#psh" x="282" y="0" width="16" height="16"/><use href="#clx" x="438" y="2" width="16" height="16"/><use href="#brk" x="511" y="1" width="16" height="16"/><use href="#out" x="596" y="2" width="16" height="16"/><use href="#trs" x="661" y="2" width="16" height="16"/><use href="#fr" x="750" y="2" width="16" height="16"/><use href="#fr" x="847" y="2" width="16" height="16"/><use href="#fs" x="945" y="2" width="16" height="16"/><use href="#sch" x="1250" y="2" width="16" height="16"/><use href="#prp" x="1342" y="2" width="18" height="16"/></svg>
<div class="t" style="left:31px;top:1127px">Cl...</div>
<div class="t w" style="left:84px;top:1127px">Ob...</div>
<div class="t w" style="left:136px;top:1127px">To...</div>
<div class="t w" style="left:190px;top:1127px">Se...</div>
<div class="t w" style="left:242px;top:1127px">Do...</div>
<div class="t w" style="left:301px;top:1127px">Package Manager Console</div>
<div class="t w" style="left:457px;top:1127px">Error List</div>
<div class="t w" style="left:530px;top:1127px">Breakpoints</div>
<div class="t w" style="left:617px;top:1127px">Output</div>
<div class="t w" style="left:680px;top:1127px">Test Results</div>
<div class="t" style="left:769px;top:1127px">Find Results 1</div>
<div class="t w" style="left:866px;top:1127px">Find Results 2</div>
<div class="t w" style="left:963px;top:1127px">Find Symbol Results</div>
<div class="t w" style="left:1269px;top:1127px">Schema View</div>
<div class="t" style="left:1361px;top:1127px">Properties</div>
<div class="t w" style="left:3px;top:1154px">Ready</div>
<div style="left:0;top:1172px;width:1600px;height:4px;background:#dcdcd6"></div>

<!-- Solution Explorer -->
<div style="left:1245px;top:97px;width:349px;height:19px;background:linear-gradient(#fef6c8,#f8dc8c);border-radius:2px 2px 0 0"></div>
<div class="t f" style="left:1246px;top:99px">Solution Explorer (master)</div>
<svg style="left:1548px;top:99px" width="46" height="16" fill="none"><path d="M2 5h8l-4 4z" fill="#5a5a4a"/><path d="M17 2h5v6h-5zM15 8h9M19.500 9v5" stroke="#4a4a40"/><path d="M33 3l9 9M42 3l-9 9" stroke="#5a5a4a" stroke-width="1.300"/></svg>
<div class="tb" style="left:1245px;top:116px;width:349px;height:26px"></div>
<div style="left:1278px;top:118px;width:21px;height:21px;background:#fce9b4;border:1px solid #d8a850;box-sizing:border-box"></div>
<svg style="left:1245px;top:116px" width="110" height="26"><use href="#tbA" x="7" y="6" width="16" height="16"/><path d="M29 4v20M80 4v20" stroke="#8a96ae"/><use href="#tbB" x="36" y="6" width="16" height="16"/><use href="#tbC" x="58" y="6" width="16" height="16"/><use href="#tbD" x="87" y="6" width="16" height="16"/></svg>
<div class="wh" style="left:1245px;top:142px;width:349px;height:676px"></div>
<div style="left:0;top:143px;width:1577px;height:675px;overflow:hidden">
<div class="r" style="--x:1277px"><svg class="c" style="left:1255px;width:18px"><use href="#sol"/></svg><svg style="left:1249px;top:4px;width:8px;height:8px"><path d="M.5 4l2 3 4-6" stroke="#e0402a" fill="none" stroke-width="1.300"/></svg><span style="font-weight:bold;font-size:12.500px;transform:scaleX(.93)">TheHouseVB</span></div>
<div class="r" style="--x:1295px"><s class="p"></s><svg class="k"><use href="#lk"/></svg><svg class="c"><use href="#fmy"/></svg><span>My Project</span></div>
<div class="r" style="--x:1295px"><s class="p"></s><svg class="c"><use href="#fgr"/></svg><span>References</span></div>
<div class="r" style="--x:1295px"><svg class="c"><use href="#fdb"/></svg><span>App_Data</span></div>
<div class="r" style="--x:1295px"><s></s><svg class="c"><use href="#fp"/></svg><span>App_Start</span></div>
<div class="r" style="--x:1314px"><svg class="c"><use href="#pg"/></svg><span>BundleConfig.vb</span></div>
<div class="r" style="--x:1314px"><svg class="k"><use href="#lk"/></svg><svg class="c"><use href="#vb"/></svg><span>FilterConfig.vb</span></div>
<div class="r" style="--x:1314px"><svg class="k"><use href="#lk"/></svg><svg class="c"><use href="#vb"/></svg><span>RouteConfig.vb</span></div>
<div class="r" style="--x:1314px"><svg class="k"><use href="#lk"/></svg><svg class="c"><use href="#vb"/></svg><span>WebApiConfig.vb</span></div>
<div class="r" style="--x:1295px"><s class="p"></s><svg class="c"><use href="#fg"/></svg><span>bin</span></div>
<div class="r" style="--x:1295px"><s class="p"></s><svg class="c"><use href="#fo"/></svg><span>Content</span></div>
<div class="r" style="--x:1295px"><s></s><svg class="c"><use href="#fp"/></svg><span>Controllers</span></div>
<div class="r" style="--x:1314px"><svg class="k"><use href="#lk"/></svg><svg class="c"><use href="#vb"/></svg><span>AdminController.vb</span></div>
<div class="r" style="--x:1314px"><svg class="k"><use href="#lk"/></svg><svg class="c"><use href="#vb"/></svg><span>HomeController.vb</span></div>
<div class="r" style="--x:1314px"><svg class="k"><use href="#lk"/></svg><svg class="c"><use href="#vb"/></svg><span>LoginController.vb</span></div>
<div class="r" style="--x:1314px"><svg class="k"><use href="#lk"/></svg><svg class="c"><use href="#vb"/></svg><span>UserController.vb</span></div>
<div class="r" style="--x:1295px"><s class="p"></s><svg class="c"><use href="#fo"/></svg><span>Image</span></div>
<div class="r" style="--x:1295px"><s></s><svg class="c"><use href="#fp"/></svg><span>Models</span></div>
<div class="r" style="--x:1314px"><svg class="k"><use href="#lk"/></svg><svg class="c"><use href="#vb"/></svg><span>AU.vb</span></div>
<div class="r" style="--x:1314px"><svg class="k"><use href="#lk"/></svg><svg class="c"><use href="#vb"/></svg><span>PartRef.vb</span></div>
<div class="r" style="--x:1314px"><s class="p"></s><svg class="k"><use href="#lk"/></svg><svg class="c"><use href="#dbm"/></svg><span>TheHouseDB.dbml</span></div>
<div class="r" style="--x:1295px"><s class="p"></s><svg class="c"><use href="#fg"/></svg><span>obj</span></div>
<div class="r" style="--x:1295px"><s class="p"></s><svg class="c"><use href="#fg"/></svg><span>packages</span></div>
<div class="r" style="--x:1295px"><s class="p"></s><svg class="c"><use href="#fo"/></svg><span>Scripts</span></div>
<div class="r" style="--x:1295px"><s></s><svg class="c"><use href="#fp"/></svg><span>Views</span></div>
<div class="r" style="--x:1314px"><s></s><svg class="c"><use href="#fp"/></svg><span>Admin</span></div>
<div class="r" style="--x:1333px"><svg class="k"><use href="#lk"/></svg><svg class="c"><use href="#vh"/></svg><span>AddNewCategory.vbhtml</span></div>
<div class="r" style="--x:1333px"><svg class="k"><use href="#lk"/></svg><svg class="c"><use href="#vh"/></svg><span>AddNewModel.vbhtml</span></div>
<div class="r" style="--x:1333px"><svg class="k"><use href="#lk"/></svg><svg class="c"><use href="#vh"/></svg><span>AddNewPart.vbhtml</span></div>
<div class="r" style="--x:1333px"><svg class="k"><use href="#lk"/></svg><svg class="c"><use href="#vh"/></svg><span>AddNewSupplier.vbhtml</span></div>
<div class="r" style="--x:1333px"><svg class="k"><use href="#lk"/></svg><svg class="c"><use href="#vh"/></svg><span>AddNewUser.vbhtml</span></div>
<div class="r" style="--x:1333px"><svg class="k"><use href="#lk"/></svg><svg class="c"><use href="#vh"/></svg><span>AutoModels.vbhtml</span></div>
<div class="r" style="--x:1333px"><svg class="k"><use href="#lk"/></svg><svg class="c"><use href="#vh"/></svg><span>Categories.vbhtml</span></div>
<div class="r" style="--x:1333px"><svg class="k"><use href="#lk"/></svg><svg class="c"><use href="#vh"/></svg><span>Index.vbhtml</span></div>
<div class="r" style="--x:1333px"><svg class="k"><use href="#lk"/></svg><svg class="c"><use href="#vh"/></svg><span>LogOff.vbhtml</span></div>
<div class="r" style="--x:1333px"><svg class="k"><use href="#lk"/></svg><svg class="c"><use href="#vh"/></svg><span>OnePart.vbhtml</span></div>
<div class="r" style="--x:1333px"><svg class="k"><use href="#lk"/></svg><svg class="c"><use href="#vh"/></svg><span>Parts.vbhtml</span></div>
<div class="r" style="--x:1333px"><svg class="k"><use href="#lk"/></svg><svg class="c"><use href="#vh"/></svg><span>PartTable.vbhtml</span></div>
<div class="r" style="--x:1333px"><svg class="k"><use href="#lk"/></svg><svg class="c"><use href="#vh"/></svg><span>Suppliers.vbhtml</span></div>
<div class="r" style="--x:1333px"><svg class="k"><use href="#lk"/></svg><svg class="c"><use href="#vh"/></svg><span>Users.vbhtml</span></div>
<div class="r" style="--x:1314px"><s></s><svg class="c"><use href="#fp"/></svg><span>Home</span></div>
<div class="r" style="--x:1333px"><svg class="k"><use href="#lk"/></svg><svg class="c"><use href="#vh"/></svg><span>GetProjectCode.vbhtml</span></div>
</div>
<div class="dith" style="left:1577px;top:143px;width:17px;height:675px"></div>
<div class="btn up" style="left:1577px;top:143px;width:17px;height:16px"></div>
<div class="thumb" style="left:1577px;top:160px;width:17px;height:363px"></div>
<div class="btn dn" style="left:1577px;top:802px;width:17px;height:16px"></div>

<!-- Properties -->
<div class="pt" style="left:1245px;top:824px;width:349px;height:19px;border-radius:2px 2px 0 0"></div>
<div class="t w" style="left:1246px;top:826px">Properties</div>
<svg style="left:1548px;top:826px" width="46" height="16" fill="none"><path d="M2 5h8l-4 4z" fill="#cdd6e6"/><path d="M17 2h5v6h-5zM15 8h9M19.500 9v5" stroke="#dce3ef"/><path d="M33 3l9 9M42 3l-9 9" stroke="#dce3ef" stroke-width="1.300"/></svg>
<div class="tb" style="left:1245px;top:843px;width:349px;height:27px"></div>
<div class="wh" style="left:1246px;top:848px;width:347px;height:20px"></div>
<div class="t bd" style="left:1250px;top:849px">_Layout.vbhtml</div>
<div class="t" style="left:1343px;top:849px">File Properties</div>
<div style="left:1579px;top:848px;width:12px;height:20px;background:#e0ddd2"></div>
<div class="arr" style="left:1581px;top:857px"></div>
<div class="tb" style="left:1245px;top:870px;width:349px;height:26px"></div>
<div style="left:1272px;top:872px;width:22px;height:22px;background:#fce9b4;border:1px solid #d8a850;box-sizing:border-box"></div>
<svg style="left:1245px;top:870px" width="90" height="26"><use href="#cat" x="6" y="6" width="18" height="16"/><path d="M52 4v20" stroke="#8a96ae"/><path d="M30.500 10l2.500-7 2.500 7M31.500 8h3" stroke="#2d55a8" fill="none"/><path d="M30 13h6l-6 7h6" stroke="#8a2a2a" fill="none"/><use href="#az" x="26" y="4" width="18" height="18"/><use href="#pgs" x="58" y="5" width="16" height="16"/></svg>
<div class="wh" style="left:1245px;top:896px;width:349px;height:165px;border-top:1px solid #8a8f98;box-sizing:border-box"></div>
<div style="left:1246px;top:897px;width:14px;height:102px;background:#e8eaee"></div>
<div style="left:1260px;top:897px;width:148px;height:16px;background:#e4e4e0"></div>
<div style="left:1260px;top:930px;width:334px;height:1px;background:#e8eaee"></div>
<div style="left:1260px;top:913px;width:334px;height:1px;background:#e8eaee"></div>
<div style="left:1260px;top:947px;width:334px;height:1px;background:#e8eaee"></div>
<div style="left:1260px;top:964px;width:334px;height:1px;background:#e8eaee"></div>
<div style="left:1260px;top:981px;width:334px;height:1px;background:#e8eaee"></div>
<div style="left:1260px;top:998px;width:334px;height:1px;background:#e8eaee"></div>
<div style="left:1408px;top:897px;width:1px;height:102px;background:#e8eaee"></div>
<div class="t f" style="left:1263px;top:897px">Build Action</div>
<div class="t f" style="left:1263px;top:914px">Copy to Output Directory</div>
<div class="t f" style="left:1263px;top:931px">Custom Tool</div>
<div class="t f" style="left:1263px;top:948px">Custom Tool Namespace</div>
<div class="t f" style="left:1263px;top:965px">File Name</div>
<div class="t f" style="left:1263px;top:982px;color:#808080">Full Path</div>
<div class="t f" style="left:1410px;top:897px">Content</div>
<div class="t f" style="left:1410px;top:914px">Do not copy</div>
<div class="t f" style="left:1410px;top:965px">_Layout.vbhtml</div>
<div style="left:1400px;top:982px;width:194px;height:16px;overflow:hidden"><div class="t f" style="left:10px;top:0;color:#808080">G:\Projects\All_Test\TheHouseVB1\Views\Shared</div></div>
<div style="left:1245px;top:1061px;width:349px;height:63px;background:#dbdfe6;border:1px solid #767b84;box-sizing:border-box"></div>
<div style="left:1246px;top:1062px;width:347px;height:3px;background:#c4c9d2;border-bottom:1px solid #767b84"></div>
<div class="t bd" style="left:1251px;top:1067px">Build Action</div>
<div class="t f" style="left:1250px;top:1083px">How the file relates to the build and deployment processes.</div>
</body></html>
